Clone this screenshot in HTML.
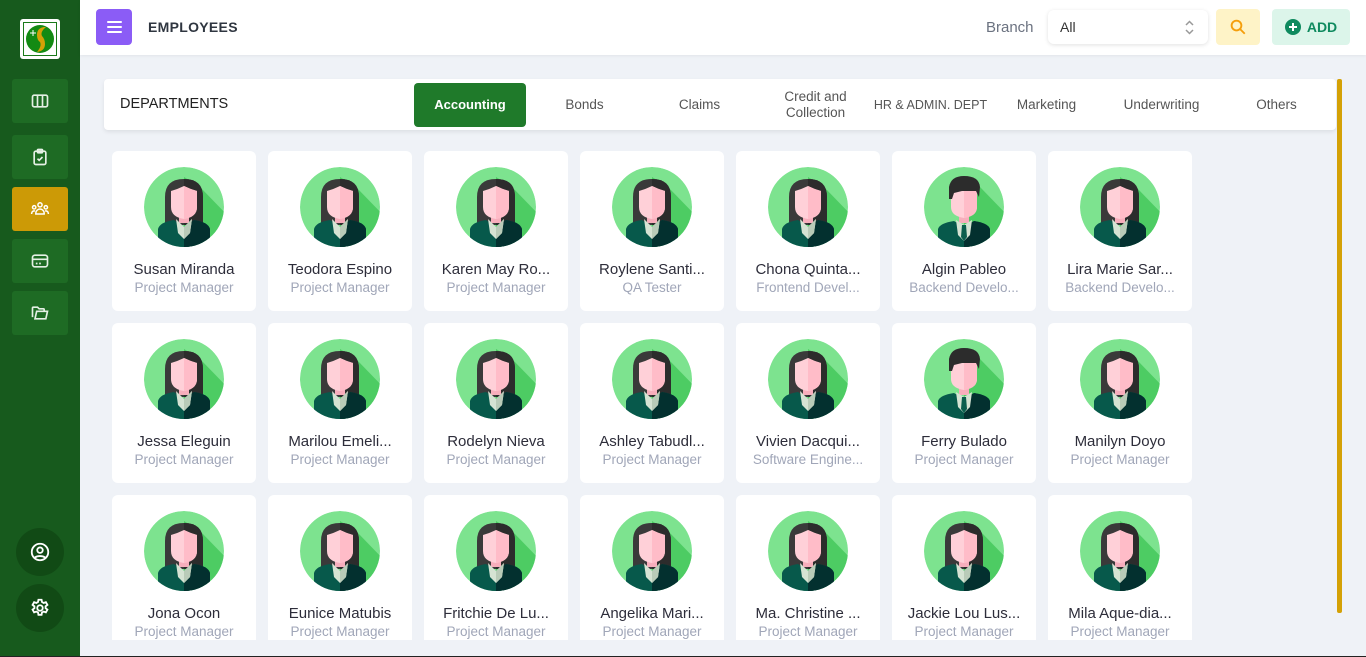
<!DOCTYPE html>
<html><head><meta charset="utf-8"><style>
*{box-sizing:border-box;margin:0;padding:0}
body{width:1366px;height:657px;overflow:hidden;background:#eff2f7;font-family:"Liberation Sans",sans-serif;position:relative}
.sb{position:absolute;left:0;top:0;width:80px;height:656px;background:#175a1d}
.logo{position:absolute;left:20px;top:19px;width:40px;height:40px;background:#fff;border-radius:3px;padding:3px}
.nb{position:absolute;left:12px;width:56px;height:44px;background:#1e6b24;border-radius:3px;display:flex;align-items:center;justify-content:center}
.circ{position:absolute;left:16px;width:48px;height:48px;border-radius:50%;background:#114a15;display:flex;align-items:center;justify-content:center}
.hd{position:absolute;left:80px;top:0;width:1286px;height:55px;background:#fff;box-shadow:0 1px 3px rgba(0,0,0,.06)}
.menu{position:absolute;left:96px;top:9px;width:36px;height:36px;background:#8b5cf6;border-radius:4px;display:flex;flex-direction:column;justify-content:center;align-items:center;gap:3px}
.menu i{display:block;width:15px;height:2px;background:#fff;border-radius:1px}
.title{position:absolute;left:148px;top:19px;font-size:14px;font-weight:bold;color:#2f3640;letter-spacing:.3px}
.br{position:absolute;left:986px;top:19px;font-size:15px;color:#6b7280}
.sel{position:absolute;left:1048px;top:10px;width:160px;height:34px;background:#fff;border-radius:6px;box-shadow:0 1px 4px rgba(0,0,0,.12);font-size:14px;color:#333;padding:9px 12px}
.srch{position:absolute;left:1216px;top:9px;width:44px;height:36px;background:#fef3c7;border-radius:4px;display:flex;align-items:center;justify-content:center}
.add{position:absolute;left:1272px;top:9px;width:78px;height:36px;background:#dcf5ea;border-radius:4px;color:#0f8a5f;font-weight:bold;font-size:14px;display:flex;align-items:center;justify-content:center;gap:6px}
.dept{position:absolute;left:104px;top:79px;width:1232px;height:51px;background:#fff;border-radius:4px;box-shadow:0 2px 4px rgba(0,0,0,.08)}
.dept .lb{position:absolute;left:16px;top:17px;font-size:14.5px;color:#222}
.tab{position:absolute;top:4px;width:115px;height:44px;display:flex;align-items:center;justify-content:center;text-align:center;font-size:13.5px;color:#555;line-height:16px}
.tab.on{background:#1f7a2a;color:#fff;font-weight:bold;border-radius:4px;width:112px;font-size:13px}
.scr{position:absolute;left:1337px;top:79px;width:5px;height:534px;background:#d4a106;border-radius:2px}
.clip{position:absolute;left:104px;top:140px;width:1230px;height:500px;overflow:hidden}
.card{position:absolute;width:144px;height:160px;background:#fff;border-radius:6px;text-align:center}
.card svg{position:absolute;left:32px;top:16px}
.nm{position:absolute;left:0;right:0;top:110px;font-size:15px;color:#2d2d3a;white-space:nowrap}
.rl{position:absolute;left:0;right:0;top:129px;font-size:13.5px;color:#a0a6b8;white-space:nowrap}
.bl{position:absolute;left:0;top:656px;width:1366px;height:1px;background:#222}
</style></head><body>
<svg width="0" height="0" style="position:absolute">
<defs>
<clipPath id="cc"><circle cx="40" cy="40" r="40"/></clipPath>
<symbol id="f" viewBox="0 0 80 80"><g clip-path="url(#cc)">
<circle cx="40" cy="40" r="40" fill="#7de38f"/>
<polygon points="40,10 56,20 90,55 80,90 40,80" fill="#4dcc63"/>
<path d="M21,58 L21,30 Q21,12 40,12 Q59,12 59,30 L59,58 Z" fill="#3a3a3a"/>
<path d="M40,12 Q59,12 59,30 L59,58 L40,58 Z" fill="#2c2c2c"/>
<rect x="35" y="44" width="10" height="12" fill="#f7aebc"/>
<path d="M27,24 Q34,22 40,19 Q46,22 53,24 L53,40 Q53,50 40,52 Q27,50 27,40 Z" fill="#ffd0d8"/>
<path d="M40,19 Q46,22 53,24 L53,40 Q53,50 40,52 Z" fill="#ffbcc8"/>
<path d="M14,80 L14,62 Q16,55 30,53 L40,60 L50,53 Q64,55 66,62 L66,80 Z" fill="#07594b"/>
<path d="M40,60 L50,53 Q64,55 66,62 L66,80 L40,80 Z" fill="#03302f"/>
<polygon points="32,52 40,60 48,52 46,66 40,72 34,66" fill="#d5e3d3"/>
<polygon points="40,60 48,52 46,66 40,72" fill="#b9cbb8"/>
</g></symbol>
<symbol id="m" viewBox="0 0 80 80"><g clip-path="url(#cc)">
<circle cx="40" cy="40" r="40" fill="#7de38f"/>
<polygon points="40,10 56,20 90,55 80,90 40,80" fill="#4dcc63"/>
<rect x="35" y="42" width="10" height="14" fill="#f7aebc"/>
<path d="M27,24 L53,24 L53,40 Q53,49 40,51 Q27,49 27,40 Z" fill="#ffd0d8"/>
<path d="M40,24 L53,24 L53,40 Q53,49 40,51 Z" fill="#ffbcc8"/>
<path d="M25,32 L25,20 Q27,9 40,9 Q55,9 56,20 L55,30 L52,24 L38,24 L30,26 L28,32 Z" fill="#2c2c2c"/>
<path d="M14,80 L14,62 Q16,56 30,54 L40,60 L50,54 Q64,56 66,62 L66,80 Z" fill="#07594b"/>
<path d="M40,60 L50,54 Q64,56 66,62 L66,80 L40,80 Z" fill="#03302f"/>
<polygon points="32,53 40,58 48,53 46,68 40,74 34,68" fill="#d5e3d3"/>
<polygon points="38,58 42,58 43,70 40,74 37,70" fill="#0b5e4d"/>
</g></symbol>
</defs></svg>

<div class="sb">
<div class="logo"><svg width="34" height="34" viewBox="0 0 34 34"><rect x="0.5" y="0.5" width="33" height="33" fill="none" stroke="#1a7a1a"/><circle cx="17" cy="17" r="14" fill="#138a13"/><path d="M21,5 Q14,6 14,13 Q14,18 17,20 Q19,24 14,30 Q22,29 22,22 Q22,17 19,14 Q17,10 23,5 Z" fill="#d4a106"/><path d="M10,8v6M7,11h6" stroke="#fff" stroke-width="1"/></svg></div>
<div class="nb" style="top:79px"><svg width="20" height="20" viewBox="0 0 24 24" fill="none" stroke="#e5f0e5" stroke-width="2"><rect x="3" y="5" width="18" height="14" rx="2"/><path d="M9 5v14M15 5v14"/></svg></div>
<div class="nb" style="top:135px"><svg width="20" height="20" viewBox="0 0 24 24" fill="none" stroke="#e5f0e5" stroke-width="2"><rect x="5" y="5" width="14" height="16" rx="2"/><rect x="9" y="3" width="6" height="4" rx="1"/><path d="M9 14l2 2 4-4"/></svg></div>
<div class="nb" style="top:187px;background:#cc9a06"><svg width="22" height="20" viewBox="0 0 24 24" fill="none" stroke="#fff" stroke-width="1.8"><circle cx="12" cy="7" r="2.5"/><circle cx="5" cy="10" r="2"/><circle cx="19" cy="10" r="2"/><path d="M7 18v-1a5 5 0 0110 0v1zM2 18v-1a3 3 0 014-2.5M22 18v-1a3 3 0 00-4-2.5"/></svg></div>
<div class="nb" style="top:239px"><svg width="20" height="20" viewBox="0 0 24 24" fill="none" stroke="#e5f0e5" stroke-width="2"><rect x="3" y="5" width="18" height="14" rx="3"/><path d="M3 10h18M7 15h2M11 15h2"/></svg></div>
<div class="nb" style="top:291px"><svg width="20" height="20" viewBox="0 0 24 24" fill="none" stroke="#e5f0e5" stroke-width="2"><path d="M3 17V6a1 1 0 011-1h5l2 2h5a1 1 0 011 1v1"/><path d="M6 19l2-9h13l-2 9z"/></svg></div>
<div class="circ" style="top:528px"><svg width="22" height="22" viewBox="0 0 24 24" fill="none" stroke="#fff" stroke-width="2"><circle cx="12" cy="12" r="9"/><circle cx="12" cy="10" r="3"/><path d="M6.5 18a7 4 0 0111 0"/></svg></div>
<div class="circ" style="top:584px"><svg width="22" height="22" viewBox="0 0 24 24" fill="none" stroke="#fff" stroke-width="2"><circle cx="12" cy="12" r="3"/><path d="M10.3 3h3.4l.5 2.5 1.8 1 2.4-.9 1.7 3-2 1.6v2l2 1.6-1.7 3-2.4-.9-1.8 1-.5 2.5h-3.4l-.5-2.5-1.8-1-2.4.9-1.7-3 2-1.6v-2l-2-1.6 1.7-3 2.4.9 1.8-1z"/></svg></div>
</div>

<div class="hd"></div>
<div class="menu"><i></i><i></i><i></i></div>
<div class="title">EMPLOYEES</div>
<div class="br">Branch</div>
<div class="sel">All<svg style="position:absolute;right:14px;top:10px" width="9" height="15" viewBox="0 0 9 15" fill="none" stroke="#999" stroke-width="1.5"><path d="M1 5l3.5-3.5L8 5M1 10l3.5 3.5L8 10"/></svg></div>
<div class="srch"><svg width="18" height="18" viewBox="0 0 24 24" fill="none" stroke="#f59e0b" stroke-width="2.5"><circle cx="10" cy="10" r="6.5"/><path d="M15 15l6 6"/></svg></div>
<div class="add"><svg width="16" height="16" viewBox="0 0 16 16"><circle cx="8" cy="8" r="8" fill="#0f8a5f"/><path d="M8 4v8M4 8h8" stroke="#fff" stroke-width="2"/></svg>ADD</div>

<div class="dept"><div class="lb">DEPARTMENTS</div>
<div class="tab on" style="left:310px">Accounting</div>
<div class="tab" style="left:423px">Bonds</div>
<div class="tab" style="left:538px">Claims</div>
<div class="tab" style="left:654px">Credit and<br>Collection</div>
<div class="tab" style="left:769px;font-size:12.5px">HR &amp; ADMIN. DEPT</div>
<div class="tab" style="left:885px">Marketing</div>
<div class="tab" style="left:1000px">Underwriting</div>
<div class="tab" style="left:1115px">Others</div>
</div>
<div class="scr"></div>

<div class="clip">
<div class="card" style="left:8px;top:11px"><svg width="80" height="80"><use href="#f"/></svg><div class="nm">Susan Miranda</div><div class="rl">Project Manager</div></div>
<div class="card" style="left:164px;top:11px"><svg width="80" height="80"><use href="#f"/></svg><div class="nm">Teodora Espino</div><div class="rl">Project Manager</div></div>
<div class="card" style="left:320px;top:11px"><svg width="80" height="80"><use href="#f"/></svg><div class="nm">Karen May Ro...</div><div class="rl">Project Manager</div></div>
<div class="card" style="left:476px;top:11px"><svg width="80" height="80"><use href="#f"/></svg><div class="nm">Roylene Santi...</div><div class="rl">QA Tester</div></div>
<div class="card" style="left:632px;top:11px"><svg width="80" height="80"><use href="#f"/></svg><div class="nm">Chona Quinta...</div><div class="rl">Frontend Devel...</div></div>
<div class="card" style="left:788px;top:11px"><svg width="80" height="80"><use href="#m"/></svg><div class="nm">Algin Pableo</div><div class="rl">Backend Develo...</div></div>
<div class="card" style="left:944px;top:11px"><svg width="80" height="80"><use href="#f"/></svg><div class="nm">Lira Marie Sar...</div><div class="rl">Backend Develo...</div></div>

<div class="card" style="left:8px;top:183px"><svg width="80" height="80"><use href="#f"/></svg><div class="nm">Jessa Eleguin</div><div class="rl">Project Manager</div></div>
<div class="card" style="left:164px;top:183px"><svg width="80" height="80"><use href="#f"/></svg><div class="nm">Marilou Emeli...</div><div class="rl">Project Manager</div></div>
<div class="card" style="left:320px;top:183px"><svg width="80" height="80"><use href="#f"/></svg><div class="nm">Rodelyn Nieva</div><div class="rl">Project Manager</div></div>
<div class="card" style="left:476px;top:183px"><svg width="80" height="80"><use href="#f"/></svg><div class="nm">Ashley Tabudl...</div><div class="rl">Project Manager</div></div>
<div class="card" style="left:632px;top:183px"><svg width="80" height="80"><use href="#f"/></svg><div class="nm">Vivien Dacqui...</div><div class="rl">Software Engine...</div></div>
<div class="card" style="left:788px;top:183px"><svg width="80" height="80"><use href="#m"/></svg><div class="nm">Ferry Bulado</div><div class="rl">Project Manager</div></div>
<div class="card" style="left:944px;top:183px"><svg width="80" height="80"><use href="#f"/></svg><div class="nm">Manilyn Doyo</div><div class="rl">Project Manager</div></div>

<div class="card" style="left:8px;top:355px"><svg width="80" height="80"><use href="#f"/></svg><div class="nm">Jona Ocon</div><div class="rl">Project Manager</div></div>
<div class="card" style="left:164px;top:355px"><svg width="80" height="80"><use href="#f"/></svg><div class="nm">Eunice Matubis</div><div class="rl">Project Manager</div></div>
<div class="card" style="left:320px;top:355px"><svg width="80" height="80"><use href="#f"/></svg><div class="nm">Fritchie De Lu...</div><div class="rl">Project Manager</div></div>
<div class="card" style="left:476px;top:355px"><svg width="80" height="80"><use href="#f"/></svg><div class="nm">Angelika Mari...</div><div class="rl">Project Manager</div></div>
<div class="card" style="left:632px;top:355px"><svg width="80" height="80"><use href="#f"/></svg><div class="nm">Ma. Christine ...</div><div class="rl">Project Manager</div></div>
<div class="card" style="left:788px;top:355px"><svg width="80" height="80"><use href="#f"/></svg><div class="nm">Jackie Lou Lus...</div><div class="rl">Project Manager</div></div>
<div class="card" style="left:944px;top:355px"><svg width="80" height="80"><use href="#f"/></svg><div class="nm">Mila Aque-dia...</div><div class="rl">Project Manager</div></div>
</div>
<div class="bl"></div>
</body></html>
